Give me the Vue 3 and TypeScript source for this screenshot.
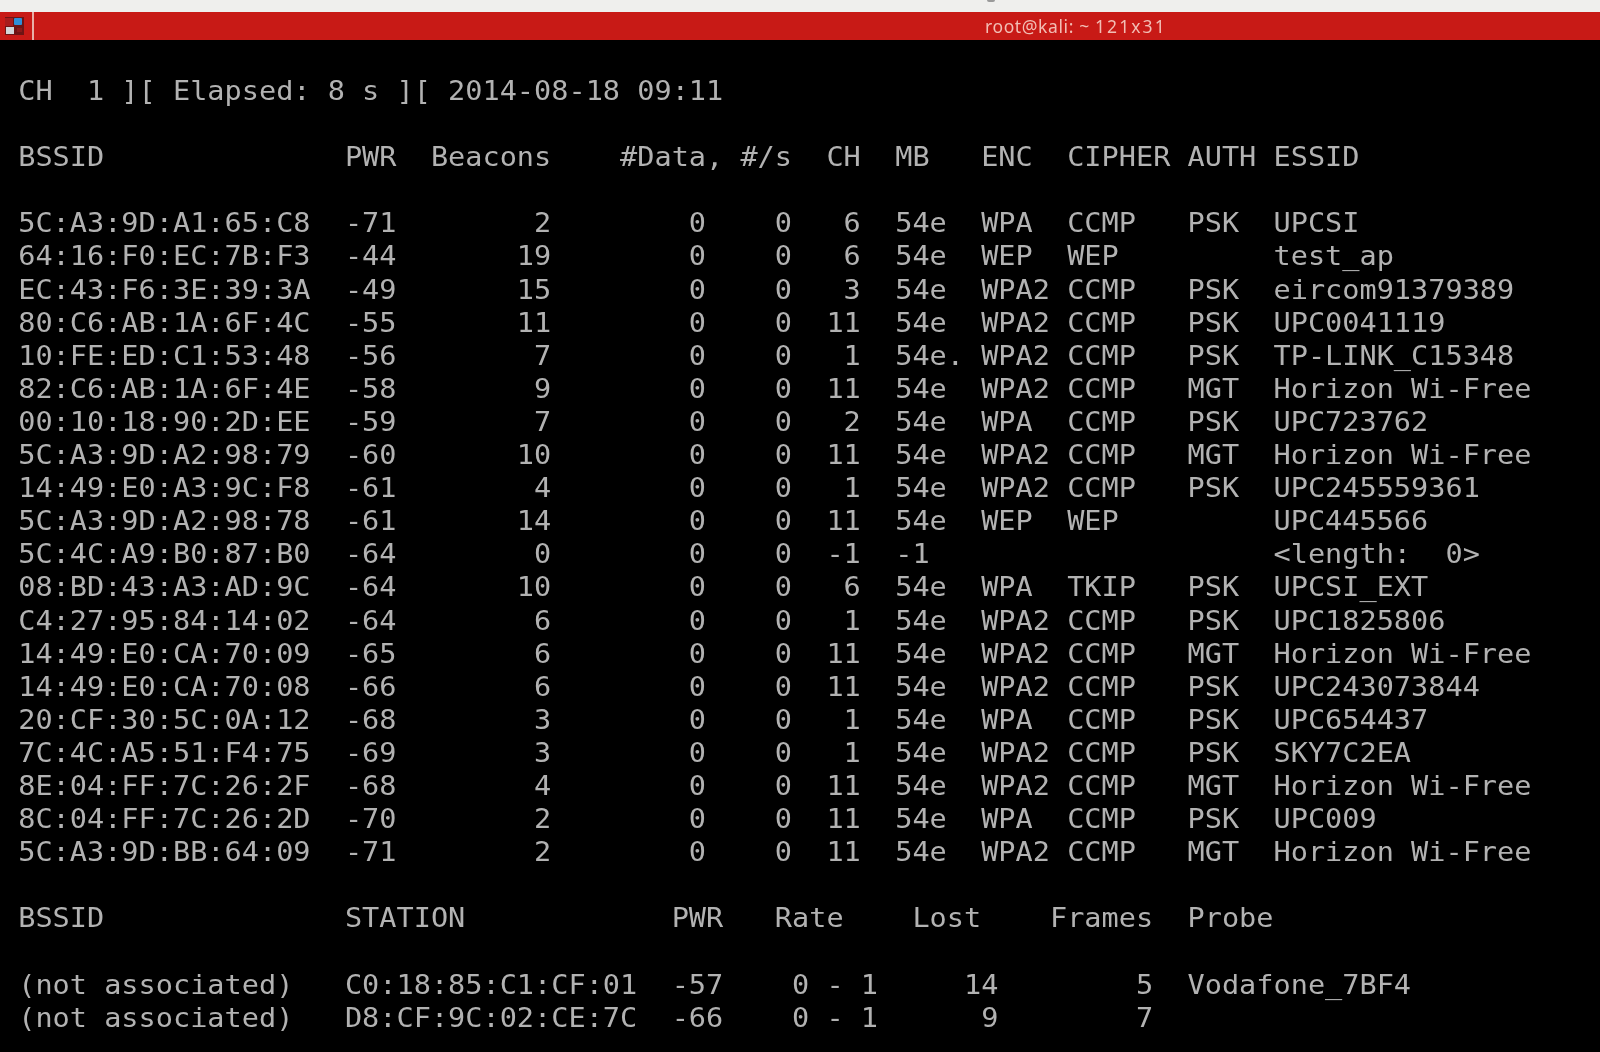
<script setup lang="ts">
type Ap = [string, number, number, number, string, string, string, string, string];

const aps: Ap[] = [
  ['5C:A3:9D:A1:65:C8', -71, 2, 6, '54e', 'WPA', 'CCMP', 'PSK', 'UPCSI'],
  ['64:16:F0:EC:7B:F3', -44, 19, 6, '54e', 'WEP', 'WEP', '', 'test_ap'],
  ['EC:43:F6:3E:39:3A', -49, 15, 3, '54e', 'WPA2', 'CCMP', 'PSK', 'eircom91379389'],
  ['80:C6:AB:1A:6F:4C', -55, 11, 11, '54e', 'WPA2', 'CCMP', 'PSK', 'UPC0041119'],
  ['10:FE:ED:C1:53:48', -56, 7, 1, '54e.', 'WPA2', 'CCMP', 'PSK', 'TP-LINK_C15348'],
  ['82:C6:AB:1A:6F:4E', -58, 9, 11, '54e', 'WPA2', 'CCMP', 'MGT', 'Horizon Wi-Free'],
  ['00:10:18:90:2D:EE', -59, 7, 2, '54e', 'WPA', 'CCMP', 'PSK', 'UPC723762'],
  ['5C:A3:9D:A2:98:79', -60, 10, 11, '54e', 'WPA2', 'CCMP', 'MGT', 'Horizon Wi-Free'],
  ['14:49:E0:A3:9C:F8', -61, 4, 1, '54e', 'WPA2', 'CCMP', 'PSK', 'UPC245559361'],
  ['5C:A3:9D:A2:98:78', -61, 14, 11, '54e', 'WEP', 'WEP', '', 'UPC445566'],
  ['5C:4C:A9:B0:87:B0', -64, 0, -1, '-1', '', '', '', '<length:  0>'],
  ['08:BD:43:A3:AD:9C', -64, 10, 6, '54e', 'WPA', 'TKIP', 'PSK', 'UPCSI_EXT'],
  ['C4:27:95:84:14:02', -64, 6, 1, '54e', 'WPA2', 'CCMP', 'PSK', 'UPC1825806'],
  ['14:49:E0:CA:70:09', -65, 6, 11, '54e', 'WPA2', 'CCMP', 'MGT', 'Horizon Wi-Free'],
  ['14:49:E0:CA:70:08', -66, 6, 11, '54e', 'WPA2', 'CCMP', 'PSK', 'UPC243073844'],
  ['20:CF:30:5C:0A:12', -68, 3, 1, '54e', 'WPA', 'CCMP', 'PSK', 'UPC654437'],
  ['7C:4C:A5:51:F4:75', -69, 3, 1, '54e', 'WPA2', 'CCMP', 'PSK', 'SKY7C2EA'],
  ['8E:04:FF:7C:26:2F', -68, 4, 11, '54e', 'WPA2', 'CCMP', 'MGT', 'Horizon Wi-Free'],
  ['8C:04:FF:7C:26:2D', -70, 2, 11, '54e', 'WPA', 'CCMP', 'PSK', 'UPC009'],
  ['5C:A3:9D:BB:64:09', -71, 2, 11, '54e', 'WPA2', 'CCMP', 'MGT', 'Horizon Wi-Free'],
];

const apRow = ([bssid, pwr, beacons, ch, mb, enc, cipher, auth, essid]: Ap): string =>
  bssid + '  ' + String(pwr) + String(beacons).padStart(9) + '0'.padStart(9) + '0'.padStart(5) +
  String(ch).padStart(4) + '  ' + mb.padEnd(5) + enc.padEnd(5) + cipher.padEnd(7) + auth.padEnd(5) + essid;

const lines: string[] = [
  'CH  1 ][ Elapsed: 8 s ][ 2014-08-18 09:11',
  '',
  'BSSID              PWR  Beacons    #Data, #/s  CH  MB   ENC  CIPHER AUTH ESSID',
  '',
  ...aps.map(apRow),
  '',
  'BSSID              STATION            PWR   Rate    Lost    Frames  Probe',
  '',
  '(not associated)   C0:18:85:C1:CF:01  -57    0 - 1     14        5  Vodafone_7BF4',
  '(not associated)   D8:CF:9C:02:CE:7C  -66    0 - 1      9        7',
];
</script>

<template>
  <div class="screen">
    <div class="chrome"><span class="notch"></span></div>
    <header class="titlebar">
      <div class="appicon">
        <svg width="19" height="18" viewBox="0 0 19 18" aria-hidden="true">
          <rect width="19" height="18" fill="#6e1414" />
          <rect x="0" y="1" width="8" height="8" fill="#a81c1c" />
          <rect x="9" y="1" width="8" height="7" rx="1" fill="#2f8fd8" />
          <rect x="1" y="10" width="8" height="7" fill="#d4d6d8" />
          <rect x="12" y="11" width="5" height="4" fill="#8c1818" />
        </svg>
      </div>
      <div class="title">root@kali: ~ <span class="size">121x31</span></div>
    </header>
    <pre class="term"><div v-for="(line, i) in lines" :key="i" class="line">{{ line }}</div></pre>
  </div>
</template>

<style>
html,
body {
  margin: 0;
  background: #000;
}
</style>

<style scoped>
.screen {
  width: 1600px;
  height: 1052px;
  overflow: hidden;
  background: #000;
  display: flex;
  flex-direction: column;
}
.chrome {
  height: 12px;
  flex: none;
  background: #efefed;
  padding-left: 987px;
}
.notch {
  display: block;
  width: 8px;
  height: 2px;
  border-radius: 0 0 4px 4px;
  background: #9a9a9a;
  filter: blur(0.5px);
}
.titlebar {
  height: 28px;
  flex: none;
  display: flex;
  background: #c81a16;
}
.appicon {
  width: 34px;
  flex: none;
  display: flex;
  align-items: center;
  justify-content: flex-start;
  box-sizing: border-box;
  padding-left: 5px;
  border-right: 2px solid #e8b0a8;
}
.title {
  flex: 1;
  padding-left: 951px;
  font: 17.5px/28px "Noto Sans", sans-serif;
  letter-spacing: 0.6px;
  color: #f2bdb4;
  white-space: nowrap;
  filter: blur(0.3px);
}
.size {
  letter-spacing: 2.1px;
}
.term {
  margin: 0;
  padding: 34px 0 0 18.2px;
  font-family: "DejaVu Sans Mono", monospace;
  font-size: 28.57px;
  color: #b2b2b2;
  filter: blur(0.45px);
}
.line {
  height: 33.1px;
  line-height: 33.1px;
  white-space: pre;
  transform: scaleY(0.95);
}
</style>
